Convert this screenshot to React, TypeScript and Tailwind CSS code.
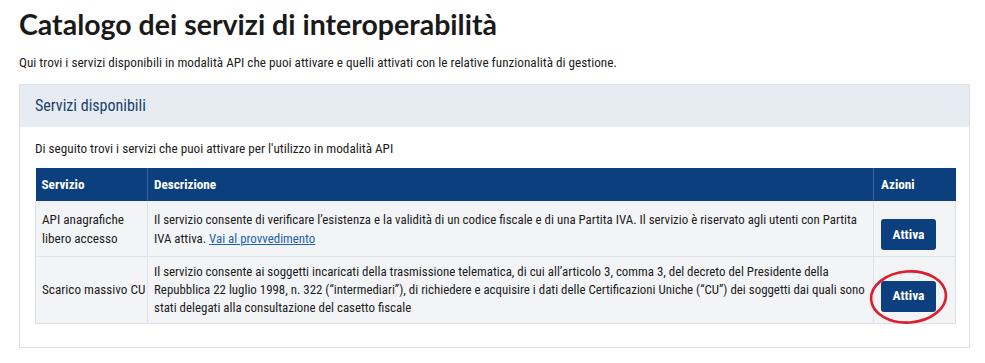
import React from "react";

const font = "font-['Roboto_Condensed','DejaVu_Sans_Condensed',sans-serif]";

function Btn({ circled }: { circled?: boolean }) {
  return (
    <div className="relative inline-block mt-3">
      <button className="h-[31px] w-[55px] rounded-[3px] bg-[#0b3f7d] text-white text-[13.5px] font-bold leading-none">
        Attiva
      </button>
      {circled && (
        <svg className="absolute left-[-12px] top-[-12px] w-[79px] h-[56px] pointer-events-none" viewBox="0 0 79 56">
          <ellipse cx="39.5" cy="28" rx="37.5" ry="25.5" fill="none" stroke="#dc1f2a" strokeWidth="2.6" transform="rotate(-4 39.5 28)" />
        </svg>
      )}
    </div>
  );
}

export default function App() {
  return (
    <div className={`${font} bg-white w-[985px] h-[363px] overflow-hidden text-[#1c1c1c]`}>
      <div className="pl-[19px] pr-[15px]">
        <h1 className="font-['Lato',sans-serif] text-[28.5px] font-bold leading-[36px] pt-[6px] text-[#1a1a1a]">
          Catalogo dei servizi di interoperabilità
        </h1>
        <p className="text-[13.2px] leading-[18px] mt-[12px]">
          Qui trovi i servizi disponibili in modalità API che puoi attivare e quelli attivati con le relative funzionalità di gestione.
        </p>
        <div className="mt-[12px] border border-[#dde2e8] w-[951px]">
          <div className="bg-[#e7ecf2] h-[42px] flex items-center px-[15px]">
            <span className="text-[16px] text-[#17406f]">Servizi disponibili</span>
          </div>
          <div className="px-[15px] pt-[12px] pb-[23px]">
            <p className="text-[13.2px] leading-[19px]">
              Di seguito trovi i servizi che puoi attivare per l'utilizzo in modalità API
            </p>
            <table className="mt-[10px] w-[920px] table-fixed border-collapse text-[13.2px] leading-[18px]">
              <colgroup>
                <col className="w-[112px]" />
                <col className="w-[726px]" />
                <col className="w-[82px]" />
              </colgroup>
              <thead>
                <tr className="bg-[#0b3f7d] text-white h-[33px]">
                  <th className="text-left font-bold px-[6px] border-r border-[#3a6297]">Servizio</th>
                  <th className="text-left font-bold px-[6px] border-r border-[#3a6297]">Descrizione</th>
                  <th className="text-left font-bold px-[7px]">Azioni</th>
                </tr>
              </thead>
              <tbody className="bg-[#f3f4f6]">
                <tr className="border-b border-[#dde2e8]">
                  <td className="align-middle px-[6px] py-[6px] border-l border-r border-[#dde2e8] leading-[19px]">
                    API anagrafiche libero accesso
                  </td>
                  <td className="align-middle px-[6px] py-[6px] border-r border-[#dde2e8] whitespace-nowrap text-[12.9px] leading-[19px]">
                    Il servizio consente di verificare l’esistenza e la validità di un codice fiscale e di una Partita IVA. Il servizio è riservato agli utenti con Partita
                    <br />
                    IVA attiva.{" "}
                    <a href="#" className="text-[#1d62b0] underline">Vai al provvedimento</a>
                  </td>
                  <td className="align-middle px-[7px] pt-[6px] pb-[6px] border-r border-[#dde2e8]">
                    <Btn />
                  </td>
                </tr>
                <tr className="border-b border-[#dde2e8]">
                  <td className="align-middle px-[6px] py-[6px] border-l border-r border-[#dde2e8] whitespace-nowrap">
                    Scarico massivo CU
                  </td>
                  <td className="align-middle px-[6px] py-[6px] border-r border-[#dde2e8] whitespace-nowrap text-[12.9px]">
                    Il servizio consente ai soggetti incaricati della trasmissione telematica, di cui all’articolo 3, comma 3, del decreto del Presidente della
                    <br />
                    Repubblica 22 luglio 1998, n. 322 (“intermediari”), di richiedere e acquisire i dati delle Certificazioni Uniche (“CU”) dei soggetti dai quali sono
                    <br />
                    stati delegati alla consultazione del casetto fiscale
                  </td>
                  <td className="align-middle px-[7px] pt-[6px] pb-[6px] border-r border-[#dde2e8]">
                    <Btn circled />
                  </td>
                </tr>
              </tbody>
            </table>
          </div>
        </div>
      </div>
    </div>
  );
}
